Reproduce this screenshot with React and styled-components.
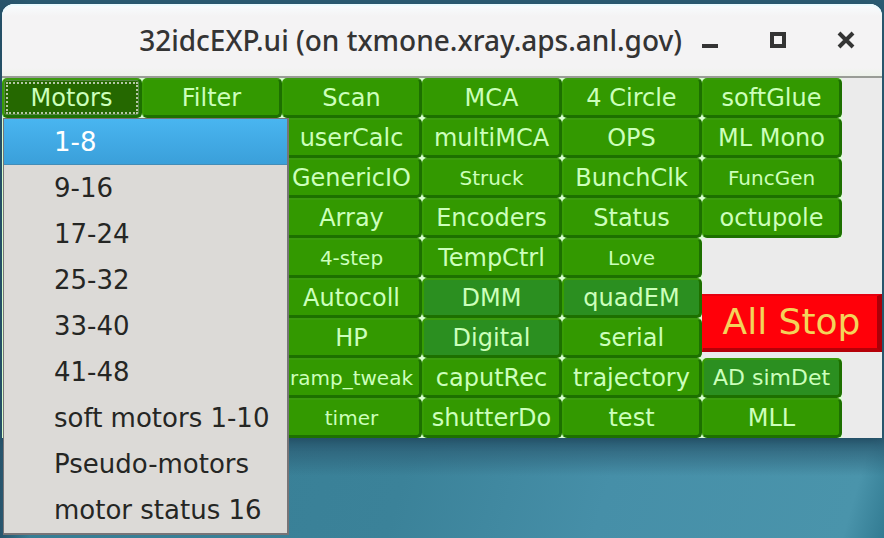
import React from "react";
import styled, { createGlobalStyle } from "styled-components";

const GlobalStyle = createGlobalStyle`
  * { box-sizing: border-box; }
  html, body { margin: 0; min-height: 100%; }
  body {
    font-family: "DejaVu Sans", sans-serif;
    background: #3a8499;
  }
`;

const Desktop = styled.main`
  min-height: 100vh;
  padding: 4px 2px 0;
  overflow: hidden;
  background:
    linear-gradient(90deg, #28546c 0, rgba(40, 84, 108, 0) 30px),
    linear-gradient(180deg, #2b5c73 0, #2b5c73 438px, rgba(43, 92, 115, 0) 476px),
    linear-gradient(106deg, #347b92 0%, #3b8299 52%, #468fa8 72%, #4a94ab 96%, #327b92 100%);
`;

const Window = styled.section`
  border-radius: 12px 12px 0 0;
  background: #ebebeb;
  box-shadow: 0 3px 10px rgba(15, 45, 65, 0.3);
`;

const TitleBar = styled.header`
  display: flex;
  align-items: center;
  justify-content: flex-end;
  height: 74px;
  padding: 0 20px 0 0;
  border-bottom: 2px solid #999c96;
  border-radius: 12px 12px 0 0;
  background: linear-gradient(#f8fdff 0, #f4f3f4 12px, #f4f3f4 64px, #edf2ea 100%);
  box-shadow: inset 0 2px #e9fbff;
`;

const Title = styled.h1`
  margin: 0;
  font: 500 28px/36px "Noto Sans", sans-serif;
  color: #343434;
  white-space: nowrap;
`;

const WindowControls = styled.div`
  display: flex;
  gap: 36px;
  margin-left: 12px;
`;

const WindowButton = styled.button`
  display: flex;
  width: 32px;
  height: 32px;
  padding: 0;
  align-items: center;
  justify-content: center;
  border: 0;
  background: transparent;
  color: #343434;

  svg { width: 18px; height: 18px; }
`;

const Panel = styled.div`
  position: relative;
  display: grid;
  grid-template-columns: repeat(6, minmax(0, 7fr)) minmax(0, 2fr);
  grid-auto-rows: 40px;
`;

const faces = {
  green: "#339900",
  teal: "#2b8f20",
  pressed: "#256800",
};

const textSizes = { small: "20px", medium: "22px", normal: "24px" };

const PanelButton = styled.button`
  grid-column: ${(p) => p.$column};
  grid-row: ${(p) => p.$row};
  min-width: 0;
  padding: 0;
  border: 3px solid;
  border-color: #3a9a0c #1d7000 #1d7000 #379d03;
  border-top-width: 2px;
  border-left-width: 2px;
  border-radius: 5px;
  outline: ${(p) => (p.$face === "pressed" ? "2px dotted #b5c7a5" : "none")};
  outline-offset: -6px;
  background: ${(p) => faces[p.$face]};
  color: #ccffbb;
  font: ${(p) => textSizes[p.$size]}/32px "DejaVu Sans", sans-serif;
  white-space: nowrap;
  box-shadow: 0 0 0 1px ${(p) => (p.$face === "pressed" ? "#568643" : "transparent")} inset;
`;

const CornerBacking = styled.div`
  grid-column: ${(p) => p.$column};
  grid-row: ${(p) => p.$row};
  background: #d8ffcf;
`;

const StopButton = styled.button`
  grid-column: 6 / 8;
  grid-row: 6 / 8;
  align-self: end;
  height: 58px;
  margin-bottom: 6px;
  padding: 0 0 0 3px;
  border: solid;
  border-width: 2px 5px 4px 1px;
  border-color: #e5000f #ab0008 #b50008 #ff0009;
  background: #ff0009;
  color: #f4d35a;
  font: 36px/48px "DejaVu Sans", sans-serif;
  white-space: nowrap;
`;

const Menu = styled.div`
  position: absolute;
  z-index: 1;
  top: 40px;
  left: 1px;
  width: 286px;
  border: 1px solid #777477;
  border-right-width: 2px;
  border-bottom-width: 2px;
  background: #dcdad7;
`;

const MenuItem = styled.button`
  display: block;
  width: 100%;
  height: 46px;
  padding: 0 0 0 50px;
  border: 0;
  background: ${(p) => (p.$active ? "linear-gradient(#49b5f0, #3a9fd9)" : "transparent")};
  box-shadow: ${(p) => (p.$active ? "inset 0 -1px #438db8" : "none")};
  color: ${(p) => (p.$active ? "#ffffff" : "#252624")};
  font: 26px/46px "DejaVu Sans", sans-serif;
  text-align: left;
  white-space: nowrap;
`;

const columns = [
  { column: 1, labels: ["Motors"] },
  { column: 2, labels: ["Filter"] },
  { column: 3, labels: ["Scan", "userCalc", "GenericIO", "Array", "4-step", "Autocoll", "HP", "ramp_tweak", "timer"] },
  { column: 4, labels: ["MCA", "multiMCA", "Struck", "Encoders", "TempCtrl", "DMM", "Digital", "caputRec", "shutterDo"] },
  { column: 5, labels: ["4 Circle", "OPS", "BunchClk", "Status", "Love", "quadEM", "serial", "trajectory", "test"] },
  { column: 6, labels: ["softGlue", "ML Mono", "FuncGen", "octupole", null, null, null, "AD simDet", "MLL"] },
];

const smallLabels = ["4-step", "ramp_tweak", "timer", "Struck", "Love", "FuncGen"];
const tealLabels = ["DMM", "Digital", "quadEM", "AD simDet"];

const menuItems = ["1-8", "9-16", "17-24", "25-32", "33-40", "41-48", "soft motors 1-10", "Pseudo-motors", "motor status 16"];

function faceOf(label) {
  if (label === "Motors") return "pressed";
  return tealLabels.includes(label) ? "teal" : "green";
}

function sizeOf(label) {
  if (label === "AD simDet") return "medium";
  return smallLabels.includes(label) ? "small" : "normal";
}

export default function App() {
  return (
    <>
      <GlobalStyle />
      <Desktop>
        <Window>
          <TitleBar>
            <Title>32idcEXP.ui (on txmone.xray.aps.anl.gov)</Title>
            <WindowControls>
              <WindowButton aria-label="Minimize">
                <svg viewBox="0 0 18 18"><path d="M1 15h16" stroke="currentColor" strokeWidth="4" /></svg>
              </WindowButton>
              <WindowButton aria-label="Maximize">
                <svg viewBox="0 0 18 18"><path d="M3 3h12v12H3z" fill="none" stroke="currentColor" strokeWidth="4" /></svg>
              </WindowButton>
              <WindowButton aria-label="Close">
                <svg viewBox="0 0 18 18"><path d="M2 2l14 14M16 2L2 16" stroke="currentColor" strokeWidth="4" /></svg>
              </WindowButton>
            </WindowControls>
          </TitleBar>
          <Panel>
            <CornerBacking $column="1 / 6" $row="1 / 10" />
            <CornerBacking $column="6" $row="1 / 5" />
            <CornerBacking $column="6" $row="8 / 10" />
            {columns.flatMap(({ column, labels }) =>
              labels.map((label, index) =>
                label && (
                  <PanelButton
                    key={label}
                    $column={column}
                    $row={index + 1}
                    $face={faceOf(label)}
                    $size={sizeOf(label)}
                    aria-haspopup={label === "Motors" ? "menu" : undefined}
                    aria-expanded={label === "Motors" ? true : undefined}
                  >
                    {label}
                  </PanelButton>
                )
              )
            )}
            <StopButton>All Stop</StopButton>
            <Menu role="menu" aria-label="Motors">
              {menuItems.map((item, index) => (
                <MenuItem key={item} role="menuitem" $active={index === 0}>{item}</MenuItem>
              ))}
            </Menu>
          </Panel>
        </Window>
      </Desktop>
    </>
  );
}
